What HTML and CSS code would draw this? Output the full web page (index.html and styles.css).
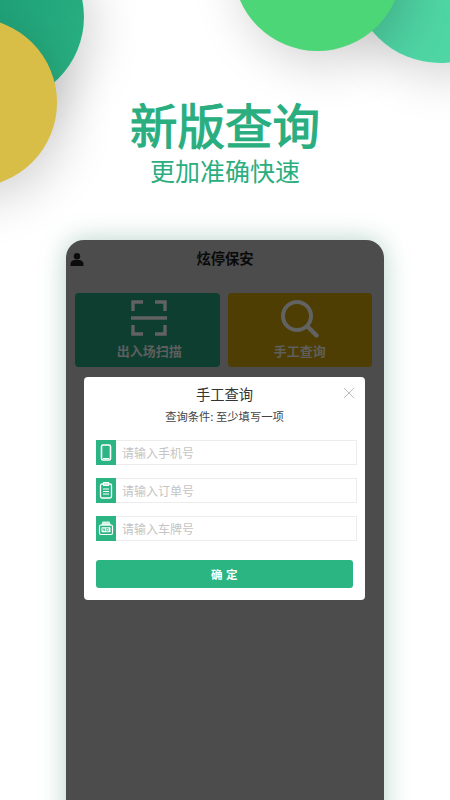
FILE: index.html
```html
<!DOCTYPE html>
<html lang="zh-CN">
<head>
<meta charset="utf-8">
<title>炫停保安</title>
<link rel="stylesheet" href="styles.css">
</head>
<body>
<div class="page">
  <div class="circle c-dark"></div>
  <div class="circle c-yellow"></div>
  <div class="circle c-teal"></div>
  <div class="circle c-light"></div>
  <header class="hero">
    <h1 class="hero-title">新版查询</h1>
    <p class="hero-sub">更加准确快速</p>
  </header>
  <main class="phone">
    <div class="phone-head">
      <svg class="user" viewBox="0 0 14 14"><circle cx="7" cy="3.8" r="3.2"/><path d="M0.5 13.5v-2.2c0-2.2 2-3.4 3.6-3.7h5.8c1.6.3 3.6 1.5 3.6 3.7v2.2z"/></svg>
      <span>炫停保安</span>
    </div>
    <div class="actions">
      <div class="action green">
        <svg viewBox="0 0 36 36" width="36" height="36" class="a-icon"><path d="M2 11V2h10M24 2h10v9M2 25v9h10M24 34h10v-9" fill="none" stroke="#626262" stroke-width="3.4"/><path d="M0.5 18h35" stroke="#626262" stroke-width="3.4" stroke-linecap="round"/></svg>
        <span>出入场扫描</span>
      </div>
      <div class="action gold">
        <svg viewBox="0 0 38 38" width="38" height="38" class="a-icon"><circle cx="16" cy="16" r="14" fill="none" stroke="#626262" stroke-width="4"/><path d="M26.5 26.5L35.5 35.5" stroke="#626262" stroke-width="4.4" stroke-linecap="round"/></svg>
        <span>手工查询</span>
      </div>
    </div>
    <section class="modal">
      <svg class="close" viewBox="0 0 12 12"><path d="M1 1l10 10M11 1L1 11" stroke="#bbb" stroke-width="1" fill="none"/></svg>
      <h2 class="modal-title">手工查询</h2>
      <p class="modal-sub">查询条件: 至少填写一项</p>
      <div class="field">
        <span class="f-icon"><svg viewBox="0 0 20 25" width="20" height="25"><rect x="5.5" y="5" width="9" height="15" rx="1.5" fill="none" stroke="#fff" stroke-width="1.6"/><path d="M7 18.5h6" stroke="#fff" stroke-width="1"/></svg></span>
        <input class="f-input" placeholder="请输入手机号">
      </div>
      <div class="field">
        <span class="f-icon"><svg viewBox="0 0 20 25" width="20" height="25"><rect x="4.5" y="6" width="11" height="14" rx="1.5" fill="none" stroke="#fff" stroke-width="1.3"/><path d="M7.5 4.5h5v3h-5zM7 11h6M7 13.5h6M7 16h6" fill="none" stroke="#fff" stroke-width="1.1"/></svg></span>
        <input class="f-input" placeholder="请输入订单号">
      </div>
      <div class="field">
        <span class="f-icon"><svg viewBox="0 0 20 25" width="20" height="25"><path d="M5 9.5L6.5 5.5h7L15 9.5z" fill="#d5f2e6"/><rect x="3.5" y="9" width="13" height="9.5" rx="1.5" fill="none" stroke="#fff" stroke-width="1.2"/><rect x="5.5" y="11.2" width="9" height="5" rx=".8" fill="#fff"/><path d="M7 15v-2.6l1.6 2.6v-2.6M10.3 12.4h2v2.6h-2z" fill="none" stroke="#2bb582" stroke-width=".7"/></svg></span>
        <input class="f-input" placeholder="请输入车牌号">
      </div>
      <button class="confirm">确 定</button>
    </section>
  </main>
</div>
</body>
</html>
```

FILE: styles.css
```css
* { box-sizing: border-box; }
html, body { margin: 0; padding: 0; }
body { background: #fff; font-family: "Noto Sans CJK SC", "Noto Sans", sans-serif; }
.page { position: relative; width: 450px; height: 800px; overflow: hidden; background: #fff; }

.circle { position: absolute; border-radius: 50%; box-shadow: 8px 12px 50px rgba(0,0,0,.18); }
.c-dark { left: -90px; top: -70px; width: 174px; height: 174px; background: linear-gradient(135deg, #15946f, #2cb585); }
.c-yellow { left: -112px; top: 18px; width: 169px; height: 169px; background: #d8bd47; }
.c-teal { left: 352px; top: -113px; width: 176px; height: 176px; background: linear-gradient(90deg, #4fd3a3, #4fd8a6); }
.c-light { left: 233px; top: -118px; width: 169px; height: 169px; background: #4dd677; }

.hero { position: relative; padding-top: 94px; text-align: center; color: #2aae80; }
.hero-title { margin: 0; font-size: 47.5px; line-height: 60px; font-weight: 400; -webkit-text-stroke: 1.2px #2aae80; }
.hero-sub { margin: 1px 0 0; font-size: 25px; line-height: 30px; font-weight: 400; }

.phone { position: relative; width: 318px; height: 600px; margin: 55px 0 0 66px; background: #4c4c4c; border-radius: 18px 18px 0 0; box-shadow: 0 0 26px rgba(60,140,110,.38); padding-top: 5px; }
.phone-head { position: relative; height: 26px; text-align: center; font-size: 14.3px; line-height: 26px; font-weight: 700; color: #0a0a0a; }
.user { position: absolute; left: 4px; top: 7px; width: 14px; height: 15px; fill: #0c0c0c; }

.actions { display: flex; gap: 8px; padding: 22px 12px 0 9px; }
.action { flex: 1; height: 74px; border-radius: 4px; display: flex; flex-direction: column; align-items: center; color: #5e5e5e; font-size: 13px; font-weight: 700; line-height: 18px; padding-top: 7px; }
.action span { margin-top: 6px; }
.a-icon { display: block; }
.green { background: #0e3e2f; }
.green > * { margin-left: 4px; }
.gold { background: #4e3e04; }
.gold span { margin-top: 4px; }

.modal { position: absolute; left: 18px; top: 137px; width: 281px; height: 223px; background: #fff; border-radius: 4px; padding: 7px 12px 0; text-align: center; }
.close { position: absolute; right: 10px; top: 10px; width: 12px; height: 12px; }
.modal-title { margin: 0; font-size: 14.3px; line-height: 20px; font-weight: 400; color: #333; }
.modal-sub { margin: 4px 0 16px; font-size: 11.3px; line-height: 16px; color: #444; }
.field { display: flex; height: 25px; margin-bottom: 13px; width: 261px; }
.f-icon { width: 20px; height: 25px; background: #2bb582; flex: none; }
.f-icon svg { display: block; }
.f-input { flex: 1; min-width: 0; height: 25px; border: 1px solid #ececec; border-left: 0; padding: 0 0 0 6px; font: 12px "Noto Sans CJK SC", sans-serif; outline: 0; background: #fff; }
.f-input::placeholder { color: #c4c4c4; opacity: 1; }
.confirm { display: block; width: 257px; height: 28px; margin-top: 19px; border: 0; border-radius: 3px; background: #2bb582; color: #fff; font: 700 11.5px/28px "Noto Sans CJK SC", sans-serif; padding: 0; letter-spacing: .5px; }
```
